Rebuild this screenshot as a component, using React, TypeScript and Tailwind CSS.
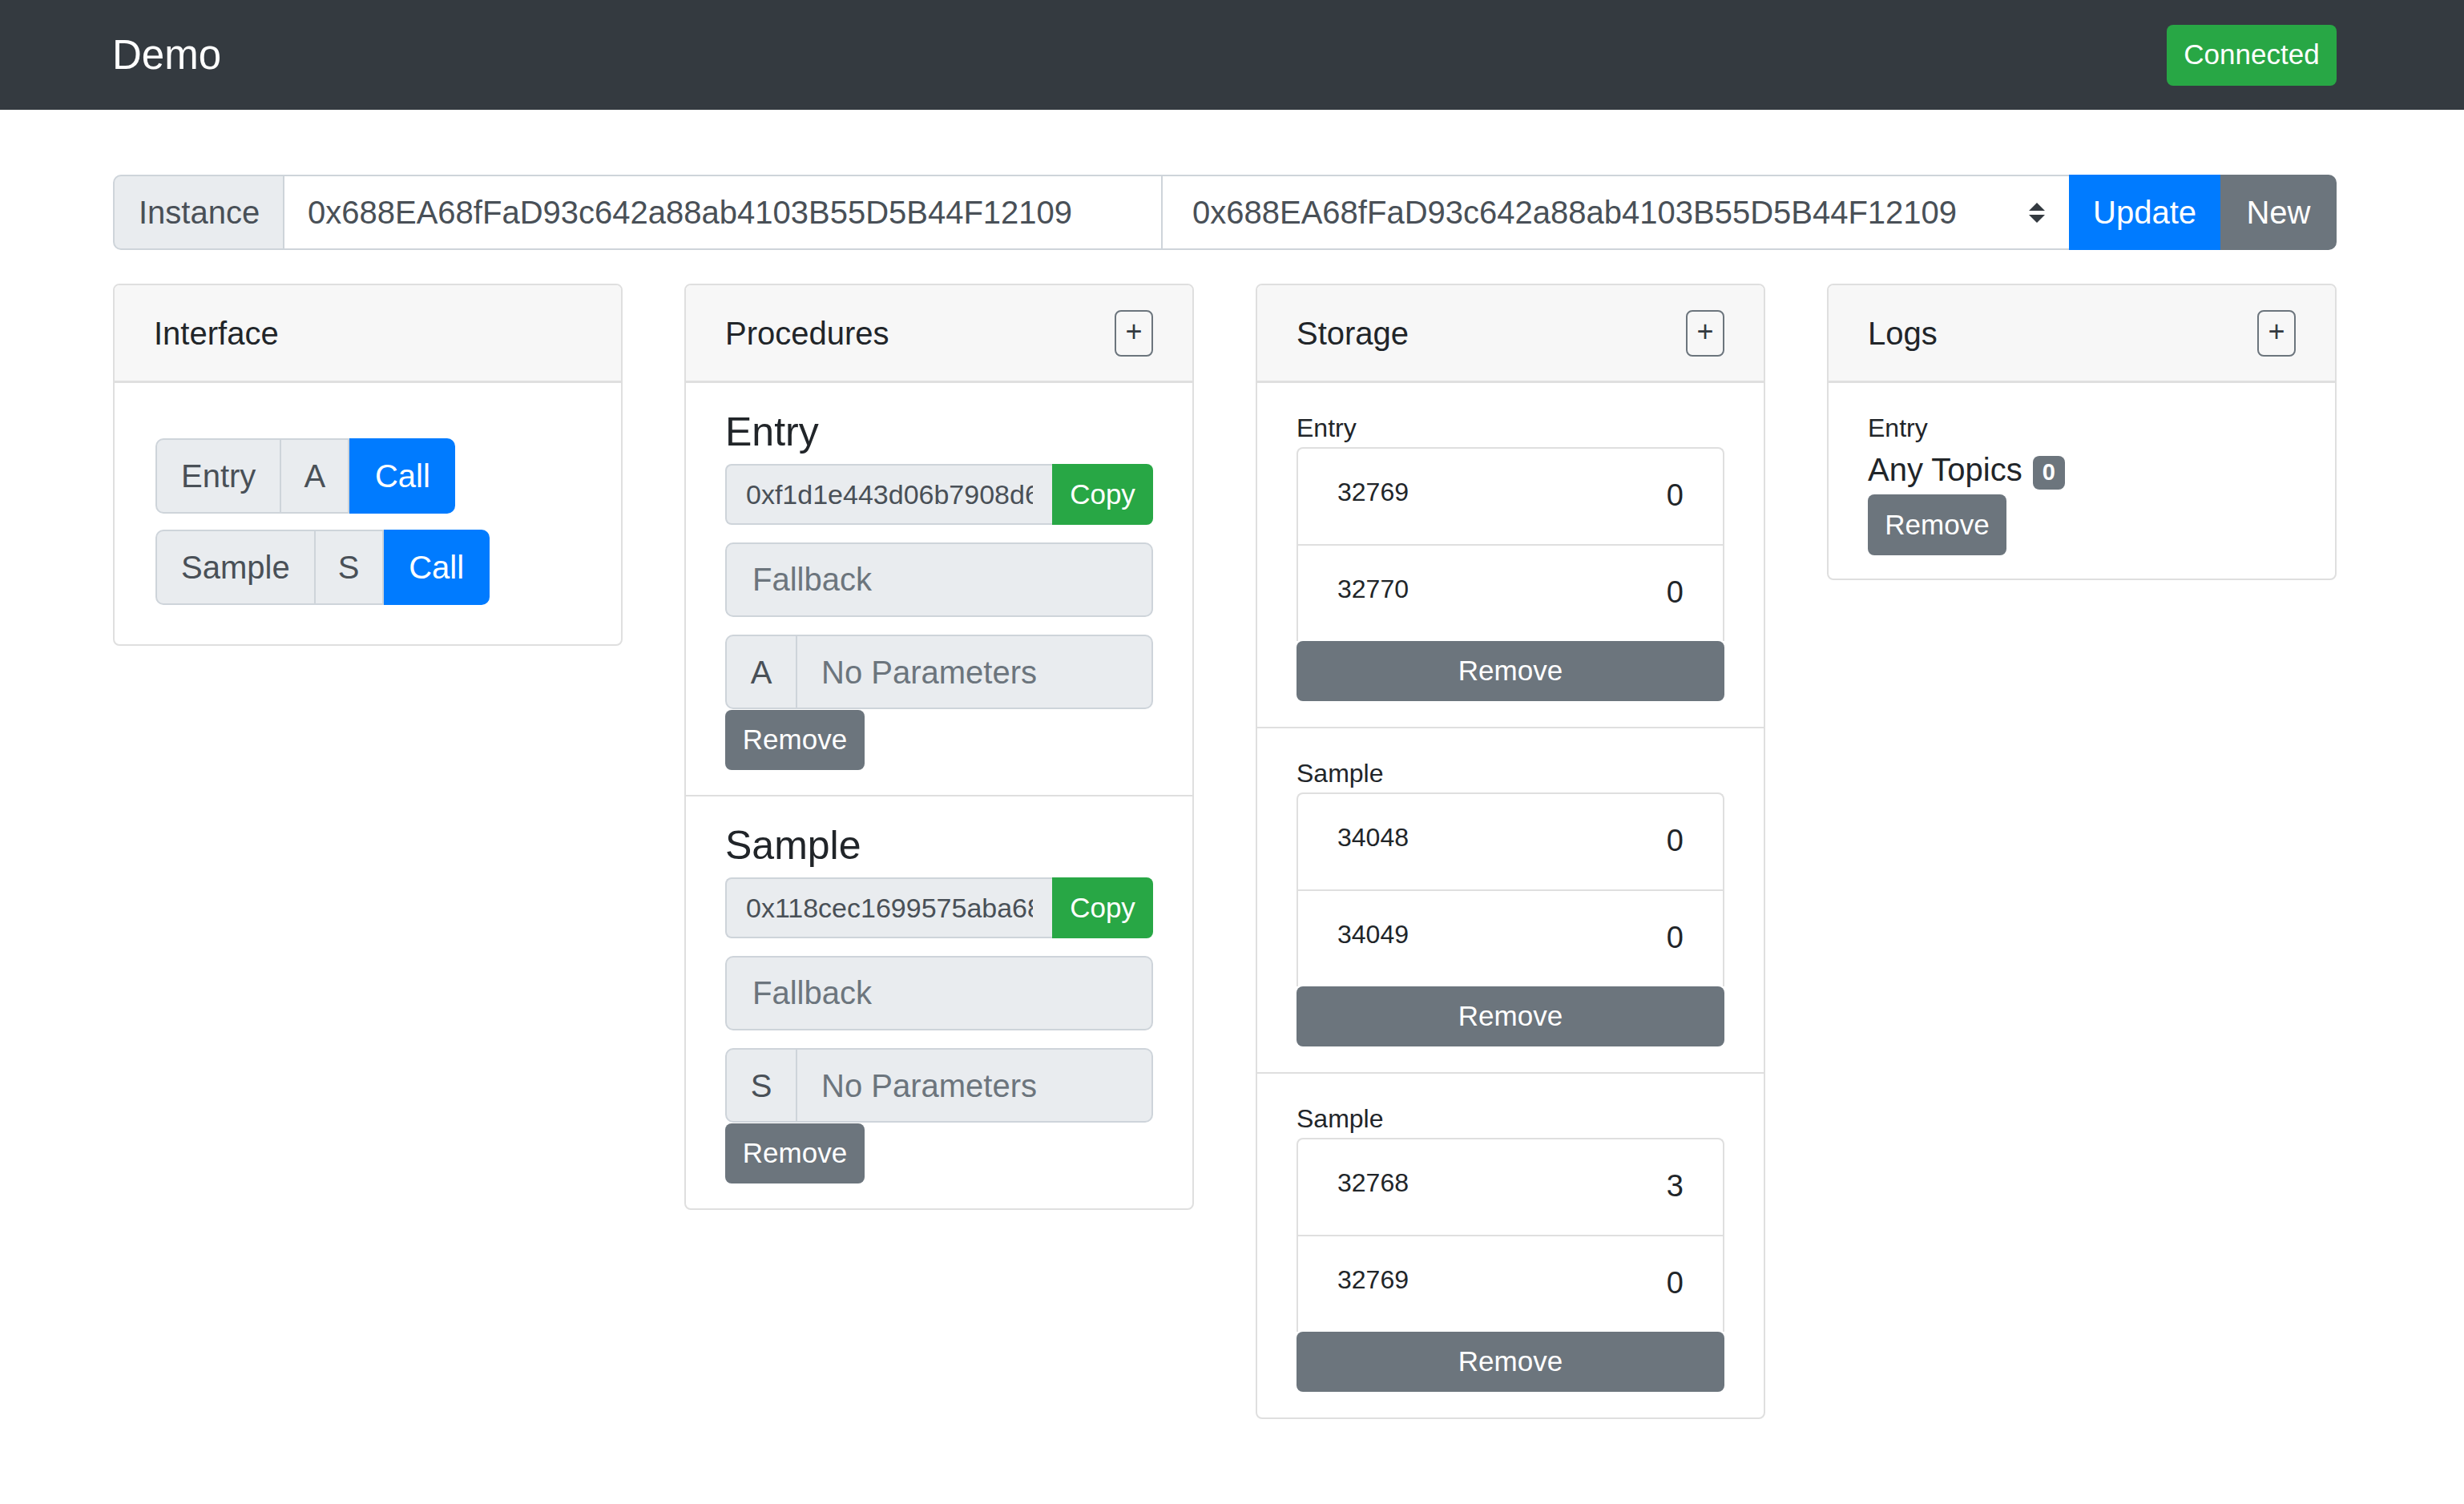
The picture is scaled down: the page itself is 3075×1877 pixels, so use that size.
import type { ReactNode } from 'react';

const ADDRESS = '0x688EA68fFaD93c642a88ab4103B55D5B44F12109';

const PROCEDURES = [
  { name: 'Entry', hash: '0xf1d1e443d06b7908d6a3c1f2e9b4', letter: 'A' },
  { name: 'Sample', hash: '0x118cec1699575aba68e2d4f0c7b1', letter: 'S' }
];

const STORAGE = [
  { name: 'Entry', rows: [['32769', '0'], ['32770', '0']] },
  { name: 'Sample', rows: [['34048', '0'], ['34049', '0']] },
  { name: 'Sample', rows: [['32768', '3'], ['32769', '0']] }
];

const addon = 'flex items-center border-2 border-[#ced4da] bg-[#e9ecef] text-[40px] text-[#495057]';

function PlusButton() {
  return (
    <button className="flex h-[58px] w-[48px] items-center justify-center rounded-[8px] border-2 border-[#6c757d] pb-[3px] text-[36px] leading-none text-[#343a40]">
      +
    </button>
  );
}

function RemoveButton({ className = '' }: { className?: string }) {
  return (
    <button className={`flex items-center justify-center rounded-[8px] bg-[#6c757d] text-[35px] text-white ${className}`}>
      Remove
    </button>
  );
}

function Card({ title, plus = true, children }: { title: string; plus?: boolean; children: ReactNode }) {
  return (
    <div className="overflow-hidden rounded-[8px] border-2 border-[#dfdfdf] bg-white">
      <div className="flex h-[122px] items-center justify-between border-b-[3px] border-[#dfdfdf] bg-[#f7f7f7] px-[49px]">
        <span className="text-[40px] leading-none">{title}</span>
        {plus && <PlusButton />}
      </div>
      {children}
    </div>
  );
}

function InterfaceCard() {
  return (
    <Card title="Interface" plus={false}>
      <div className="flex flex-col items-start gap-[20px] px-[51px] pb-[49px] pt-[69px]">
        {PROCEDURES.map((p) => (
          <div key={p.name} className="flex h-[94px]">
            <span className={`${addon} rounded-l-[10px] px-[30px]`}>{p.name}</span>
            <span className={`${addon} w-[85px] justify-center border-l-0`}>{p.letter}</span>
            <button className="flex w-[132px] items-center justify-center rounded-r-[10px] bg-[#007bff] text-[40px] text-white">
              Call
            </button>
          </div>
        ))}
      </div>
    </Card>
  );
}

function ProceduresCard() {
  return (
    <Card title="Procedures">
      {PROCEDURES.map((p, i) => (
        <div key={p.name} className={`px-[49px] pb-[31px] pt-[31px] ${i > 0 ? 'border-t-2 border-[#dfdfdf]' : ''}`}>
          <h4 className="mb-[10px] text-[50px] font-normal leading-[1.2]">{p.name}</h4>
          <div className="flex h-[76px]">
            <input
              readOnly
              value={p.hash}
              className="min-w-0 flex-1 rounded-l-[8px] border-2 border-r-0 border-[#ced4da] bg-[#e9ecef] px-[24px] text-[34px] text-[#495057] outline-none"
            />
            <button className="w-[126px] rounded-r-[8px] bg-[#28a745] text-[35px] text-white">Copy</button>
          </div>
          <input
            disabled
            placeholder="Fallback"
            className="mt-[22px] h-[93px] w-full rounded-[10px] border-2 border-[#ced4da] bg-[#e9ecef] px-[32px] text-[40px] outline-none placeholder:text-[#6c757d]"
          />
          <div className="mt-[22px] flex h-[93px]">
            <span className={`${addon} w-[90px] justify-center rounded-l-[10px]`}>{p.letter}</span>
            <input
              disabled
              placeholder="No Parameters"
              className="min-w-0 flex-1 rounded-r-[10px] border-2 border-l-0 border-[#ced4da] bg-[#e9ecef] px-[30px] text-[40px] outline-none placeholder:text-[#6c757d]"
            />
          </div>
          <RemoveButton className="mt-[1px] h-[75px] w-[174px]" />
        </div>
      ))}
    </Card>
  );
}

function StorageCard() {
  return (
    <Card title="Storage">
      {STORAGE.map((s, i) => (
        <div key={i} className={`px-[49px] pb-[32px] pt-[32px] ${i > 0 ? 'border-t-2 border-[#dfdfdf]' : ''}`}>
          <p className="text-[32px] leading-[48px]">{s.name}</p>
          <div className="flex flex-col">
            {s.rows.map(([key, value], j) => (
              <div
                key={key}
                className={`flex h-[121px] items-start justify-between border-x-2 border-t-2 border-[#dfdfdf] px-[49px] pt-[30px] ${j === 0 ? 'rounded-t-[8px]' : ''}`}
              >
                <span className="text-[32px] leading-[48px]">{key}</span>
                <span className="text-[38px] leading-[57px]">{value}</span>
              </div>
            ))}
            <RemoveButton className="h-[75px] w-full" />
          </div>
        </div>
      ))}
    </Card>
  );
}

function LogsCard() {
  return (
    <Card title="Logs">
      <div className="flex flex-col items-start px-[49px] pb-[29px] pt-[32px]">
        <p className="text-[32px] leading-[48px]">Entry</p>
        <div className="flex h-[57px] items-center gap-[13px]">
          <span className="text-[40px] leading-[57px]">Any Topics</span>
          <span className="mt-[6px] flex h-[42px] w-[40px] items-center justify-center rounded-[8px] bg-[#6c757d] text-[29px] font-bold text-white">
            0
          </span>
        </div>
        <RemoveButton className="mt-[2px] h-[76px] w-[173px]" />
      </div>
    </Card>
  );
}

export default function App() {
  return (
    <div className="min-h-screen bg-white font-['Liberation_Sans',Arial,sans-serif] text-[#212529]">
      <nav className="h-[137px] bg-[#343a40]">
        <div className="ml-[140px] flex h-full w-[2776px] items-center justify-between">
          <span className="text-[51px] leading-none text-white">Demo</span>
          <button className="h-[76px] w-[212px] rounded-[8px] bg-[#28a745] text-[35px] text-white">Connected</button>
        </div>
      </nav>

      <main className="ml-[141px] w-[2775px] pb-[100px] pt-[81px]">
        <div className="flex h-[94px] text-[40px] text-[#495057]">
          <span className={`${addon} w-[214px] shrink-0 rounded-l-[10px] pl-[30px]`}>Instance</span>
          <input
            readOnly
            value={ADDRESS}
            className="w-[1096px] shrink-0 border-y-2 border-r-2 border-[#ced4da] bg-white pl-[29px] text-[40px] text-[#495057] outline-none"
          />
          <div className="flex min-w-0 flex-1 items-center justify-between border-y-2 border-[#ced4da] pl-[37px] pr-[30px]">
            <span>{ADDRESS}</span>
            <svg width="20" height="25" viewBox="0 0 4 5" aria-hidden>
              <path d="M2 0L0 2h4zm0 5L0 3h4z" fill="#343a40" />
            </svg>
          </div>
          <button className="w-[189px] shrink-0 bg-[#007bff] text-white">Update</button>
          <button className="w-[145px] shrink-0 rounded-r-[10px] bg-[#6c757d] text-white">New</button>
        </div>

        <div className="mt-[42px] grid grid-cols-4 items-start gap-x-[77px]">
          <InterfaceCard />
          <ProceduresCard />
          <StorageCard />
          <LogsCard />
        </div>
      </main>
    </div>
  );
}
